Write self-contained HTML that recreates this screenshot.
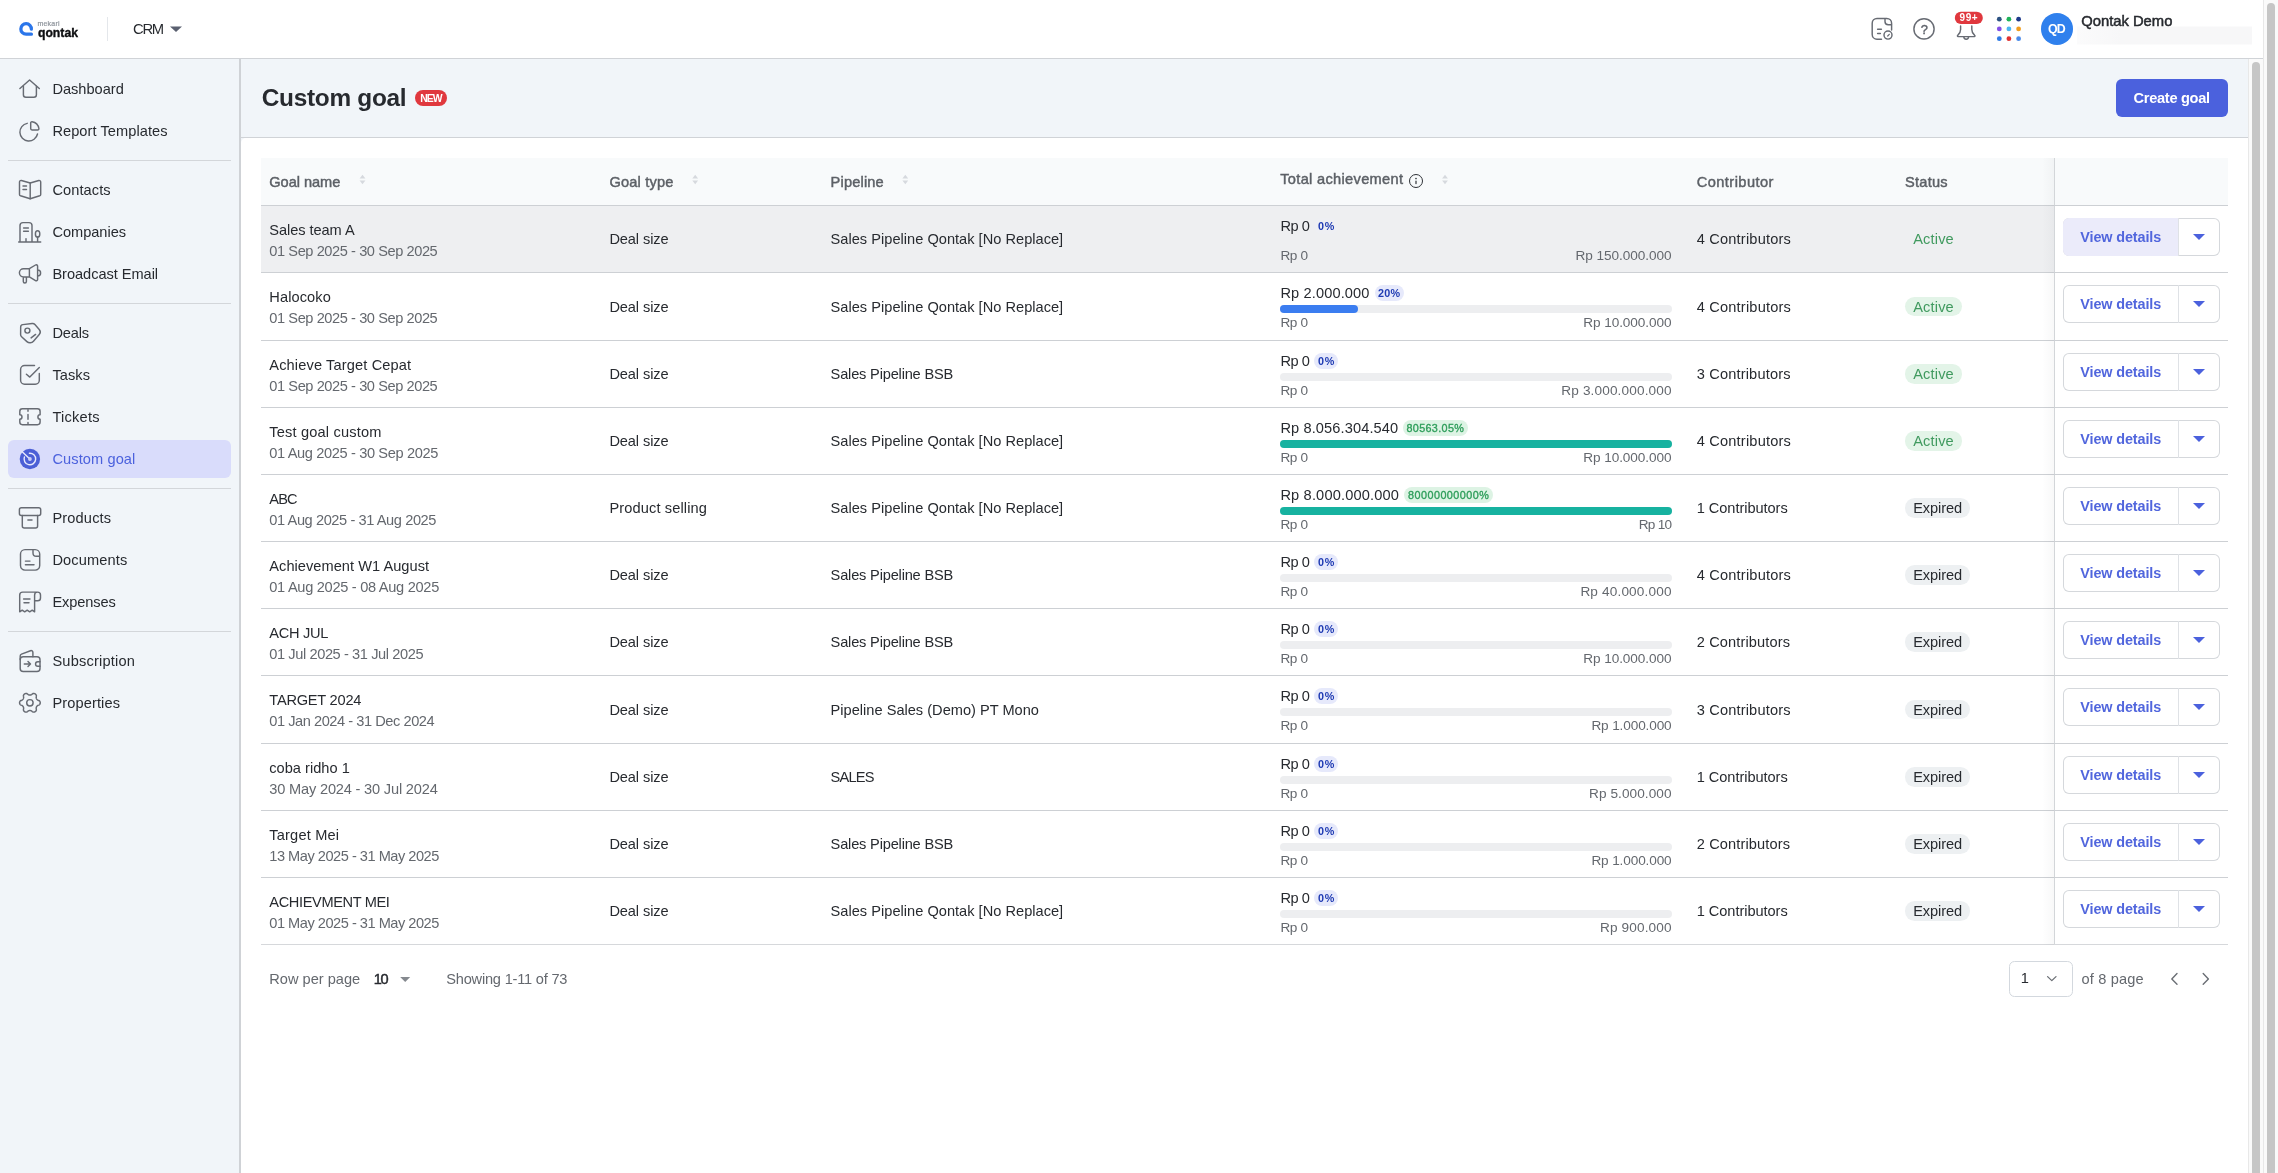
<!DOCTYPE html>
<html>
<head>
<meta charset="utf-8">
<title>Custom goal</title>
<style>
*{box-sizing:border-box;margin:0;padding:0}
html,body{width:2278px;height:1173px;overflow:hidden;background:#fff}
body{font-family:"Liberation Sans",sans-serif;color:#232933;position:relative;font-size:14px}
.abs{position:absolute}
#hdr{position:absolute;left:0;top:0;width:2263px;height:58px;background:#fff}
#hdrline{position:absolute;left:0;top:58px;width:2263px;height:1px;background:#d0d3d7}
#side{position:absolute;left:0;top:59px;width:239px;height:1114px;background:#f1f5f9}
#sideb{position:absolute;left:239px;top:59px;width:2px;height:1114px;background:#cfd2d6}
.sdiv{position:absolute;left:8px;width:223px;height:1px;background:#d3d6da}
#navact{position:absolute;left:8px;top:440px;width:223px;height:38px;border-radius:6px;background:#d9dcfb}
#main{position:absolute;left:241px;top:59px;width:2007px;height:1114px;background:#f1f5f9}
#mline{position:absolute;left:241px;top:137px;width:2007px;height:1px;background:#d0d3d7}
#panel{position:absolute;left:241px;top:138px;width:2007px;height:1035px;background:#fff;border-top-left-radius:5px}
#newb{position:absolute;left:415px;top:90px;width:32px;height:16px;border-radius:8px;background:#e0383e;color:#fff;font-size:10px;font-weight:bold;text-align:center;line-height:16px;letter-spacing:.2px}
#create{position:absolute;left:2116px;top:79px;width:112px;height:38px;border-radius:6px;background:#4b61dd}
.sbt{position:absolute;width:15px;background:#fafafa;border-left:1px solid #e8e8e8}
.sbth{position:absolute;width:8px;border-radius:4px;background:#c6c6c6}
#thead{position:absolute;left:261px;top:158px;width:1967px;height:47px;background:#f8fafb}
.hl{position:absolute;left:261px;width:1967px;height:1px;background:#cdd0d4}
.t{position:absolute;white-space:pre;line-height:20px}
#stick{position:absolute;left:2054px;top:158px;width:174px;height:787px;background:#fff;border-left:1px solid #d3d6d9}
#stickh{position:absolute;left:2055px;top:158px;width:173px;height:47px;background:#f8fafb}
#stsh{position:absolute;left:2042px;top:158px;width:12px;height:787px;background:linear-gradient(to right,rgba(35,41,51,0),rgba(35,41,51,.03))}
.btn{position:absolute;left:2063px;width:157px;height:38px;box-shadow:inset 0 0 0 1px #d5d8dc;border-radius:6px;background:#fff;overflow:hidden}
.btn i{position:absolute;left:0;top:0;width:115px;height:38px;background:#ebebfa}
.btn b{position:absolute;left:115px;top:0;width:1px;height:38px;background:#dfe2e6}
.btn s{position:absolute;left:130.3px;top:16.2px;width:0;height:0;border-left:6px solid transparent;border-right:6px solid transparent;border-top:6.2px solid #4b61dd}
#tx{position:absolute;left:0;top:0;width:2278px;height:1173px;will-change:transform}
#ov{position:absolute;left:0;top:0;width:2278px;height:1173px;pointer-events:none}
.ic{fill:none;stroke:#676b73;stroke-width:1.45;stroke-linecap:round;stroke-linejoin:round}
</style>
</head>
<body>
<div id="hdr"></div>
<div id="hdrline"></div>
<div id="side"></div>
<div id="sideb"></div>
<div id="navact"></div>
<div id="main"></div>
<div id="mline"></div>
<div id="panel"></div>
<div id="newb"></div>
<div id="create"></div>
<div id="thead"></div>
<div id="stick"></div>
<div id="stickh"></div>
<div class="sdiv" style="top:160px"></div>
<div class="sdiv" style="top:303px"></div>
<div class="sdiv" style="top:488px"></div>
<div class="sdiv" style="top:631px"></div>
<div class="abs" style="left:261px;top:206px;width:1793px;height:66px;background:#eeeff1"></div>
<div class="abs" style="left:1314.3px;top:218.0px;width:24.2px;height:16px;border-radius:8px;background:#eeeff3"></div>
<div class="btn" style="top:218px"><i></i><b></b><s></s></div>
<div class="abs" style="left:1374.5px;top:285.0px;width:29.8px;height:16px;border-radius:8px;background:#e6e9fb"></div>
<div class="abs" style="left:1280px;top:305px;width:392px;height:8px;border-radius:4px;background:#edeef0"></div>
<div class="abs" style="left:1280px;top:305px;width:78px;height:8px;border-radius:4px;background:#3b7df0"></div>
<div class="abs" style="left:1905px;top:297.1px;width:57px;height:19.4px;border-radius:9.7px;background:#e3f4e8"></div>
<div class="btn" style="top:285px"><b></b><s></s></div>
<div class="abs" style="left:1314.3px;top:353.0px;width:24.2px;height:16px;border-radius:8px;background:#e6e9fb"></div>
<div class="abs" style="left:1280px;top:373px;width:392px;height:8px;border-radius:4px;background:#edeef0"></div>
<div class="abs" style="left:1905px;top:364.2px;width:57px;height:19.4px;border-radius:9.7px;background:#e3f4e8"></div>
<div class="btn" style="top:353px"><b></b><s></s></div>
<div class="abs" style="left:1402.7px;top:420.0px;width:65.2px;height:16px;border-radius:8px;background:#ddf3e4"></div>
<div class="abs" style="left:1280px;top:440px;width:392px;height:8px;border-radius:4px;background:#edeef0"></div>
<div class="abs" style="left:1280px;top:440px;width:392.0px;height:8px;border-radius:4px;background:#17b2a0"></div>
<div class="abs" style="left:1905px;top:431.2px;width:57px;height:19.4px;border-radius:9.7px;background:#e3f4e8"></div>
<div class="btn" style="top:420px"><b></b><s></s></div>
<div class="abs" style="left:1404.3px;top:487.0px;width:88.5px;height:16px;border-radius:8px;background:#ddf3e4"></div>
<div class="abs" style="left:1280px;top:507px;width:392px;height:8px;border-radius:4px;background:#edeef0"></div>
<div class="abs" style="left:1280px;top:507px;width:392.0px;height:8px;border-radius:4px;background:#17b2a0"></div>
<div class="abs" style="left:1905px;top:498.2px;width:65.4px;height:19.4px;border-radius:9.7px;background:#edf0f2"></div>
<div class="btn" style="top:487px"><b></b><s></s></div>
<div class="abs" style="left:1314.3px;top:554.0px;width:24.2px;height:16px;border-radius:8px;background:#e6e9fb"></div>
<div class="abs" style="left:1280px;top:574px;width:392px;height:8px;border-radius:4px;background:#edeef0"></div>
<div class="abs" style="left:1905px;top:565.2px;width:65.4px;height:19.4px;border-radius:9.7px;background:#edf0f2"></div>
<div class="btn" style="top:554px"><b></b><s></s></div>
<div class="abs" style="left:1314.3px;top:621.0px;width:24.2px;height:16px;border-radius:8px;background:#e6e9fb"></div>
<div class="abs" style="left:1280px;top:641px;width:392px;height:8px;border-radius:4px;background:#edeef0"></div>
<div class="abs" style="left:1905px;top:632.2px;width:65.4px;height:19.4px;border-radius:9.7px;background:#edf0f2"></div>
<div class="btn" style="top:621px"><b></b><s></s></div>
<div class="abs" style="left:1314.3px;top:688.0px;width:24.2px;height:16px;border-radius:8px;background:#e6e9fb"></div>
<div class="abs" style="left:1280px;top:708px;width:392px;height:8px;border-radius:4px;background:#edeef0"></div>
<div class="abs" style="left:1905px;top:700.1px;width:65.4px;height:19.4px;border-radius:9.7px;background:#edf0f2"></div>
<div class="btn" style="top:688px"><b></b><s></s></div>
<div class="abs" style="left:1314.3px;top:756.0px;width:24.2px;height:16px;border-radius:8px;background:#e6e9fb"></div>
<div class="abs" style="left:1280px;top:776px;width:392px;height:8px;border-radius:4px;background:#edeef0"></div>
<div class="abs" style="left:1905px;top:767.2px;width:65.4px;height:19.4px;border-radius:9.7px;background:#edf0f2"></div>
<div class="btn" style="top:756px"><b></b><s></s></div>
<div class="abs" style="left:1314.3px;top:823.0px;width:24.2px;height:16px;border-radius:8px;background:#e6e9fb"></div>
<div class="abs" style="left:1280px;top:843px;width:392px;height:8px;border-radius:4px;background:#edeef0"></div>
<div class="abs" style="left:1905px;top:834.2px;width:65.4px;height:19.4px;border-radius:9.7px;background:#edf0f2"></div>
<div class="btn" style="top:823px"><b></b><s></s></div>
<div class="abs" style="left:1314.3px;top:890.0px;width:24.2px;height:16px;border-radius:8px;background:#e6e9fb"></div>
<div class="abs" style="left:1280px;top:910px;width:392px;height:8px;border-radius:4px;background:#edeef0"></div>
<div class="abs" style="left:1905px;top:901.2px;width:65.4px;height:19.4px;border-radius:9.7px;background:#edf0f2"></div>
<div class="btn" style="top:890px"><b></b><s></s></div>
<div class="hl" style="top:205px"></div>
<div class="hl" style="top:272px"></div>
<div class="hl" style="top:340px"></div>
<div class="hl" style="top:407px"></div>
<div class="hl" style="top:474px"></div>
<div class="hl" style="top:541px"></div>
<div class="hl" style="top:608px"></div>
<div class="hl" style="top:675px"></div>
<div class="hl" style="top:743px"></div>
<div class="hl" style="top:810px"></div>
<div class="hl" style="top:877px"></div>
<div class="hl" style="top:944px;background:#d6d8db"></div>
<div id="stsh"></div>
<svg id="ov" viewBox="0 0 2278 1173">
<!-- logo -->
<g id="logo">
<path d="M31.35 29.1 A5.25 5.25 0 1 0 26.1 34.2 H31.4" fill="none" stroke="#2b76ea" stroke-width="3.3" stroke-linecap="round" stroke-linejoin="round"/>
</g>
<rect x="107" y="17" width="1" height="24" fill="#e4e7eb"/>
<path d="M170 26.4 H182 L176 32 Z" fill="#5a6070"/>
<!-- sidebar icons -->
<g class="ic">
<path d="M19.9 88.5 L29.6 80 L39.3 88.5"/>
<path d="M23.4 86.2 V94.8 a2.5 2.5 0 0 0 2.5 2.5 H33.9 a2.5 2.5 0 0 0 2.5 -2.5 V86.2"/>
<path d="M27.2 123.35 A8.9 8.9 0 1 0 37.5 134"/>
<path d="M30.7 122.9 V128.6 a1.3 1.3 0 0 0 1.3 1.3 H37.7 a1.2 1.2 0 0 0 1.2 -1.4 A8.4 8.4 0 0 0 32.1 121.8 a1.2 1.2 0 0 0 -1.4 1.1 Z"/>
<path d="M30.2 183 L21.4 180.5 a1.5 1.5 0 0 0 -1.9 1.4 V194.4 a1.5 1.5 0 0 0 1 1.4 L30.2 198.8 L39.7 195.8 a1.5 1.5 0 0 0 1 -1.4 V181.9 a1.5 1.5 0 0 0 -1.9 -1.4 Z"/>
<path d="M30.2 183 V198.8 M23 186 h3.5 M23 189.5 h3.5"/>
<path d="M20 242 V225.6 a3 3 0 0 1 3 -3 h6 a3 3 0 0 1 3 3 V242 M18.7 242 H40.7 M23.6 228 h4.8 M23.6 231.3 h4.8 M26 238.6 V242 M37.6 237.2 V242"/>
<ellipse cx="37.6" cy="233.9" rx="2.2" ry="3.2"/>
<path d="M29.4 268.7 H23.5 a4.1 4.1 0 0 0 0 8.2 H29.4 M29.4 268.7 L35.5 265 a1.4 1.4 0 0 1 2.1 1.2 V279.4 a1.4 1.4 0 0 1 -2.1 1.2 L29.4 276.9 Z M37.6 270 a3 3 0 0 1 0 6 M23.3 277 V281.5 a1.55 1.55 0 0 0 3.1 0 V277"/>
<path d="M20.68 327.01 A2.4 2.4 0 0 1 22.79 324.64 L32.12 323.51 A3.2 3.2 0 0 1 34.92 324.58 L39.23 329.52 A3.8 3.8 0 0 1 39.25 334.50 L33.48 341.21 A4.6 4.6 0 0 1 26.90 341.62 L21.60 336.80 A3.0 3.0 0 0 1 20.61 334.56 Z"/>
<circle cx="27.4" cy="330.6" r="2.5"/>
<path d="M31.1 337.9 L35.6 334.4"/>
<path d="M34.5 365.5 H24.6 a4 4 0 0 0 -4 4 V380.2 a4 4 0 0 0 4 4 H35.3 a4 4 0 0 0 4 -4 V373.5 M26.4 374.3 L29.8 377.1 L39.3 367.5"/>
<path d="M22.4 408.8 H37.5 a2.6 2.6 0 0 1 2.6 2.6 V414.7 a2.2 2.2 0 0 0 0 4.4 V422.1 a2.6 2.6 0 0 1 -2.6 2.6 H22.4 a2.6 2.6 0 0 1 -2.6 -2.6 V419.1 a2.2 2.2 0 0 0 0 -4.4 V411.4 a2.6 2.6 0 0 1 2.6 -2.6 Z"/>
<path d="M28 409.6 V411.2 M28 414.4 V419.2 M28 422.4 V424"/>
<rect x="19.4" y="507.7" width="21.3" height="7.7" rx="2"/>
<path d="M22.3 515.4 V526 a2 2 0 0 0 2 2 H35.6 a2 2 0 0 0 2 -2 V515.4 M27.9 520 H32"/>
<rect x="20.5" y="549.6" width="19.2" height="20.5" rx="4.5"/>
<path d="M33 550.2 V553 a3.3 3.3 0 0 0 3.3 3.3 H39.2 M25.4 561.1 H30 M25.4 564.7 H34"/>
<path d="M34.6 611.8 V595.1 a3 3 0 0 1 3 -3 H22.7 a3 3 0 0 0 -3 3 V611.8 l2.5 -1.6 l2.5 1.6 l2.5 -1.6 l2.5 1.6 l2.5 -1.6 Z M37.6 592.1 a2.9 2.9 0 0 1 2.9 2.9 V598 a2.8 2.8 0 0 1 -2.8 2.8 H34.6 M23.6 599 H30 M24 602.7 H29"/>
<rect x="20.2" y="656.7" width="19.8" height="14.7" rx="3"/>
<path d="M20.2 659.5 V656 a2 2 0 0 1 1.3 -1.9 L30.5 650.7 a1.8 1.8 0 0 1 2.4 1.7 V656.7 M40 661.8 H37.8 a2.25 2.25 0 0 0 0 4.5 H40 M24.3 663.9 H30.5 M28 661.4 L30.5 663.9 L28 666.4"/>
<path d="M40.25 702.80 L40.20 703.34 L40.04 703.87 L39.77 704.36 L39.38 704.82 L38.64 705.14 L37.90 705.40 L37.47 705.70 L37.12 706.02 L36.84 706.34 L36.61 706.67 L36.43 707.04 L36.30 707.45 L36.20 707.90 L36.15 708.43 L36.30 709.20 L36.39 710.00 L36.19 710.57 L35.89 711.05 L35.52 711.45 L35.08 711.76 L34.58 711.99 L34.05 712.11 L33.48 712.13 L32.90 712.02 L32.24 711.54 L31.65 711.02 L31.17 710.81 L30.73 710.66 L30.31 710.58 L29.90 710.55 L29.49 710.58 L29.07 710.66 L28.63 710.81 L28.15 711.02 L27.56 711.54 L26.90 712.02 L26.32 712.13 L25.75 712.11 L25.22 711.99 L24.73 711.76 L24.28 711.45 L23.91 711.05 L23.61 710.57 L23.41 710.00 L23.50 709.20 L23.65 708.43 L23.60 707.90 L23.50 707.45 L23.37 707.04 L23.19 706.67 L22.96 706.34 L22.68 706.02 L22.33 705.70 L21.90 705.40 L21.16 705.14 L20.42 704.82 L20.03 704.36 L19.76 703.87 L19.60 703.34 L19.55 702.80 L19.60 702.26 L19.76 701.73 L20.03 701.24 L20.42 700.78 L21.16 700.46 L21.90 700.20 L22.33 699.90 L22.68 699.58 L22.96 699.26 L23.19 698.92 L23.37 698.56 L23.50 698.15 L23.60 697.70 L23.65 697.17 L23.50 696.40 L23.41 695.60 L23.61 695.03 L23.91 694.55 L24.28 694.15 L24.72 693.84 L25.22 693.61 L25.75 693.49 L26.32 693.47 L26.90 693.58 L27.56 694.06 L28.15 694.58 L28.63 694.79 L29.07 694.94 L29.49 695.02 L29.90 695.05 L30.31 695.02 L30.73 694.94 L31.17 694.79 L31.65 694.58 L32.24 694.06 L32.90 693.58 L33.48 693.47 L34.05 693.49 L34.58 693.61 L35.08 693.84 L35.52 694.15 L35.89 694.55 L36.19 695.03 L36.39 695.60 L36.30 696.40 L36.15 697.17 L36.20 697.70 L36.30 698.15 L36.43 698.56 L36.61 698.92 L36.84 699.26 L37.12 699.58 L37.47 699.90 L37.90 700.20 L38.64 700.46 L39.38 700.78 L39.77 701.24 L40.04 701.73 L40.20 702.26Z"/>
<circle cx="29.9" cy="702.8" r="3.2"/>
</g>
<!-- custom goal active icon -->
<circle cx="29.9" cy="459" r="10.2" fill="#4b5fd6"/>
<path d="M29.4 453.2 A5.8 5.8 0 1 1 24.4 457" fill="none" stroke="#e8eafc" stroke-width="1.4" stroke-linecap="round"/>
<path d="M22.2 451.8 L29.6 458.7" stroke="#e8eafc" stroke-width="1.4" stroke-linecap="round"/>
<circle cx="29.9" cy="459" r="1.9" fill="#c9cef6"/>
<!-- header right icons -->
<g class="ic">
<path d="M1891.6 30 V23.2 a4.8 4.8 0 0 0 -4.8 -4.8 H1877 a4.8 4.8 0 0 0 -4.8 4.8 V34.4 a4.8 4.8 0 0 0 4.8 4.8 H1881.5"/>
<path d="M1885 18.6 V21.5 a3.2 3.2 0 0 0 3.2 3.2 H1891.4 M1877.6 29.2 H1881.4 M1877.6 33.4 H1880.4"/>
<circle cx="1888" cy="35.1" r="4"/>
<path d="M1887.7 36 L1889.3 34.3" stroke-width="1.2"/>
<circle cx="1924" cy="28.9" r="10.1"/>
<path d="M1958 36.6 C1957.4 36.6 1957.2 35.8 1957.7 35.4 C1959.6 33.8 1960.6 31.8 1960.6 29.5 V26 M1974.4 36.6 C1975 36.6 1975.2 35.8 1974.7 35.4 C1972.8 33.8 1971.8 31.8 1971.8 29.5 V26 M1958 36.6 H1974.4 M1963.8 36.8 a2.4 2.4 0 0 0 4.8 0"/>
</g>
<rect x="1954.8" y="11.8" width="28" height="12.2" rx="6.1" fill="#e0383e"/>
<g>
<circle cx="1999.3" cy="19.2" r="2.4" fill="#2c5282"/><circle cx="2008.9" cy="19.2" r="2.4" fill="#1fb35a"/><circle cx="2018.6" cy="19.2" r="2.4" fill="#1e3a8a"/>
<circle cx="1999.3" cy="28.9" r="2.4" fill="#8250e6"/><circle cx="2008.9" cy="28.9" r="2.4" fill="#4db8f0"/><circle cx="2018.6" cy="28.9" r="2.4" fill="#f29d1d"/>
<circle cx="1999.3" cy="38.7" r="2.4" fill="#2f7ae5"/><circle cx="2008.9" cy="38.7" r="2.4" fill="#e03131"/><circle cx="2018.6" cy="38.7" r="2.4" fill="#4b8bea"/>
</g>
<circle cx="2057" cy="28.9" r="16" fill="#2f80ed"/>
<defs><linearGradient id="blr" x1="0" x2="1" y1="0" y2="0"><stop offset="0" stop-color="#f7f7f8" stop-opacity=".5"/><stop offset=".25" stop-color="#f7f7f8"/><stop offset="1" stop-color="#f7f7f8"/></linearGradient></defs><rect x="2077" y="26.5" width="175" height="18" fill="url(#blr)"/>
<!-- sort icons -->
<g fill="#d6d9de">
<path d="M359.6 178.4 L362.5 174.8 L365.4 178.4 Z M359.6 180.6 L362.5 184.2 L365.4 180.6 Z"/>
<path d="M692.3 178.4 L695.2 174.8 L698.1 178.4 Z M692.3 180.6 L695.2 184.2 L698.1 180.6 Z"/>
<path d="M902.4 178.4 L905.3 174.8 L908.2 178.4 Z M902.4 180.6 L905.3 184.2 L908.2 180.6 Z"/>
<path d="M1442.1 178.4 L1445 174.8 L1447.9 178.4 Z M1442.1 180.6 L1445 184.2 L1447.9 180.6 Z"/>
</g>
<!-- info icon -->
<circle cx="1416" cy="181" r="6.5" fill="none" stroke="#2f3237" stroke-width="1"/>
<path d="M1416 181 V183.6" stroke="#2f3237" stroke-width="1.2" stroke-linecap="round" fill="none"/>
<circle cx="1416" cy="178.6" r=".8" fill="#2f3237"/>
<!-- footer -->
<path d="M400.2 976.9 H410.2 L405.2 982 Z" fill="#85898f"/>
<rect x="2009.5" y="961.5" width="63" height="35" rx="5" fill="#fff" stroke="#d3d8de"/>
<path d="M2047.6 976.6 L2051.8 980.6 L2056 976.6" fill="none" stroke="#6a6e74" stroke-width="1.3" stroke-linecap="round" stroke-linejoin="round"/>
<path d="M2177 973.6 L2171.8 978.9 L2177 984.2" fill="none" stroke="#6a6e74" stroke-width="1.4" stroke-linecap="round" stroke-linejoin="round"/>
<path d="M2203.2 973.6 L2208.4 978.9 L2203.2 984.2" fill="none" stroke="#6a6e74" stroke-width="1.4" stroke-linecap="round" stroke-linejoin="round"/>
</svg>
<div id="tx"><div class="t" style="left:52.4px;top:78.8px;font-size:14.6px;color:#272a2f;letter-spacing:-0.001px;">Dashboard</div>
<div class="t" style="left:52.4px;top:120.8px;font-size:14.6px;color:#272a2f;letter-spacing:0.070px;">Report Templates</div>
<div class="t" style="left:52.4px;top:179.7px;font-size:14.6px;color:#272a2f;letter-spacing:0.094px;">Contacts</div>
<div class="t" style="left:52.4px;top:221.7px;font-size:14.6px;color:#272a2f;letter-spacing:-0.015px;">Companies</div>
<div class="t" style="left:52.4px;top:263.7px;font-size:14.6px;color:#272a2f;letter-spacing:-0.039px;">Broadcast Email</div>
<div class="t" style="left:52.4px;top:322.8px;font-size:14.6px;color:#272a2f;letter-spacing:-0.158px;">Deals</div>
<div class="t" style="left:52.4px;top:364.7px;font-size:14.6px;color:#272a2f;letter-spacing:0.086px;">Tasks</div>
<div class="t" style="left:52.4px;top:406.7px;font-size:14.6px;color:#272a2f;letter-spacing:0.248px;">Tickets</div>
<div class="t" style="left:52.4px;top:448.7px;font-size:14.6px;color:#4b61dd;letter-spacing:0.101px;">Custom goal</div>
<div class="t" style="left:52.4px;top:507.7px;font-size:14.6px;color:#272a2f;letter-spacing:0.161px;">Products</div>
<div class="t" style="left:52.4px;top:549.7px;font-size:14.6px;color:#272a2f;letter-spacing:0.128px;">Documents</div>
<div class="t" style="left:52.4px;top:591.7px;font-size:14.6px;color:#272a2f;letter-spacing:-0.093px;">Expenses</div>
<div class="t" style="left:52.4px;top:650.7px;font-size:14.6px;color:#272a2f;letter-spacing:0.199px;">Subscription</div>
<div class="t" style="left:52.4px;top:692.7px;font-size:14.6px;color:#272a2f;letter-spacing:0.114px;">Properties</div>
<div class="t" style="left:133.0px;top:18.9px;font-size:14.8px;color:#272a2f;letter-spacing:-1.281px;">CRM</div>
<div class="t" style="left:420.3px;top:88.9px;font-size:10.4px;color:#fff;letter-spacing:-0.980px;font-weight:700;">NEW</div>
<div class="t" style="left:37.4px;top:13.6px;font-size:7px;color:#8f959c;letter-spacing:0.252px;-webkit-text-stroke:.2px #8f959c;">mekari</div>
<div class="t" style="left:37.9px;top:22.8px;font-size:12.2px;color:#0d0e10;letter-spacing:0.045px;font-weight:700;-webkit-text-stroke:.35px #0d0e10;">qontak</div>
<div class="t" style="left:1920.7px;top:19.7px;font-size:12.8px;color:#5f636b;letter-spacing:-0.525px;-webkit-text-stroke:.4px #5f636b;">?</div>
<div class="t" style="left:1959.6px;top:8.4px;font-size:10px;color:#fff;letter-spacing:0.492px;font-weight:700;">99+</div>
<div class="t" style="left:2048.1px;top:19.2px;font-size:12.4px;color:#fff;letter-spacing:-0.929px;font-weight:700;">QD</div>
<div class="t" style="left:2081.2px;top:10.6px;font-size:14.8px;color:#272a2f;letter-spacing:-0.009px;-webkit-text-stroke:.5px #272a2f;">Qontak Demo</div>
<div class="t" style="left:261.8px;top:88.3px;font-size:24.4px;color:#272a2f;letter-spacing:-0.296px;font-weight:700;">Custom goal</div>
<div class="t" style="left:2133.5px;top:88.0px;font-size:14.6px;color:#fff;letter-spacing:-0.284px;font-weight:700;">Create goal</div>
<div class="t" style="left:269.3px;top:172.0px;font-size:14.6px;color:#5c6066;letter-spacing:-0.046px;-webkit-text-stroke:.45px #5c6066;">Goal name</div>
<div class="t" style="left:609.4px;top:172.0px;font-size:14.6px;color:#5c6066;letter-spacing:0.180px;-webkit-text-stroke:.45px #5c6066;">Goal type</div>
<div class="t" style="left:830.6px;top:172.0px;font-size:14.6px;color:#5c6066;letter-spacing:0.168px;-webkit-text-stroke:.45px #5c6066;">Pipeline</div>
<div class="t" style="left:1280.2px;top:169.0px;font-size:14.6px;color:#5c6066;letter-spacing:0.325px;-webkit-text-stroke:.45px #5c6066;">Total achievement</div>
<div class="t" style="left:1696.7px;top:172.0px;font-size:14.6px;color:#5c6066;letter-spacing:0.457px;-webkit-text-stroke:.45px #5c6066;">Contributor</div>
<div class="t" style="left:1905.0px;top:172.0px;font-size:14.6px;color:#5c6066;letter-spacing:0.259px;-webkit-text-stroke:.45px #5c6066;">Status</div>
<div class="t" style="left:269.3px;top:219.8px;font-size:14.6px;color:#272a2f;letter-spacing:-0.061px;">Sales team A</div>
<div class="t" style="left:269.3px;top:240.8px;font-size:14.6px;color:#64686e;letter-spacing:-0.422px;">01 Sep 2025 - 30 Sep 2025</div>
<div class="t" style="left:609.4px;top:229.1px;font-size:14.6px;color:#272a2f;letter-spacing:-0.098px;">Deal size</div>
<div class="t" style="left:830.6px;top:229.1px;font-size:14.6px;color:#272a2f;letter-spacing:0.017px;">Sales Pipeline Qontak [No Replace]</div>
<div class="t" style="left:1280.4px;top:215.6px;font-size:14.6px;color:#272a2f;letter-spacing:-0.437px;">Rp 0</div>
<div class="t" style="left:1318.0px;top:215.8px;font-size:10.8px;color:#1f3bb3;letter-spacing:0.794px;font-weight:700;">0%</div>
<div class="t" style="left:1280.4px;top:245.7px;font-size:13.6px;color:#64686e;letter-spacing:-0.377px;">Rp 0</div>
<div class="t" style="left:1575.5px;top:245.7px;font-size:13.6px;color:#64686e;letter-spacing:-0.048px;">Rp 150.000.000</div>
<div class="t" style="left:1696.7px;top:229.1px;font-size:14.6px;color:#272a2f;letter-spacing:0.195px;">4 Contributors</div>
<div class="t" style="left:1913.2px;top:229.1px;font-size:14.6px;color:#409a5f;letter-spacing:0.155px;">Active</div>
<div class="t" style="left:2080.3px;top:227.0px;font-size:14.4px;color:#5166dd;letter-spacing:-0.107px;font-weight:700;">View details</div>
<div class="t" style="left:269.3px;top:286.8px;font-size:14.6px;color:#272a2f;letter-spacing:0.087px;">Halocoko</div>
<div class="t" style="left:269.3px;top:307.8px;font-size:14.6px;color:#64686e;letter-spacing:-0.422px;">01 Sep 2025 - 30 Sep 2025</div>
<div class="t" style="left:609.4px;top:297.0px;font-size:14.6px;color:#272a2f;letter-spacing:-0.098px;">Deal size</div>
<div class="t" style="left:830.6px;top:297.0px;font-size:14.6px;color:#272a2f;letter-spacing:0.017px;">Sales Pipeline Qontak [No Replace]</div>
<div class="t" style="left:1280.4px;top:282.6px;font-size:14.6px;color:#272a2f;letter-spacing:0.127px;">Rp 2.000.000</div>
<div class="t" style="left:1378.0px;top:282.8px;font-size:10.8px;color:#1f3bb3;letter-spacing:0.230px;font-weight:700;">20%</div>
<div class="t" style="left:1280.4px;top:312.7px;font-size:13.6px;color:#64686e;letter-spacing:-0.377px;">Rp 0</div>
<div class="t" style="left:1583.2px;top:312.7px;font-size:13.6px;color:#64686e;letter-spacing:-0.064px;">Rp 10.000.000</div>
<div class="t" style="left:1696.7px;top:297.0px;font-size:14.6px;color:#272a2f;letter-spacing:0.195px;">4 Contributors</div>
<div class="t" style="left:1913.2px;top:297.0px;font-size:14.6px;color:#409a5f;letter-spacing:0.155px;">Active</div>
<div class="t" style="left:2080.3px;top:294.0px;font-size:14.4px;color:#5166dd;letter-spacing:-0.107px;font-weight:700;">View details</div>
<div class="t" style="left:269.3px;top:354.8px;font-size:14.6px;color:#272a2f;letter-spacing:0.134px;">Achieve Target Cepat</div>
<div class="t" style="left:269.3px;top:375.8px;font-size:14.6px;color:#64686e;letter-spacing:-0.422px;">01 Sep 2025 - 30 Sep 2025</div>
<div class="t" style="left:609.4px;top:364.1px;font-size:14.6px;color:#272a2f;letter-spacing:-0.098px;">Deal size</div>
<div class="t" style="left:830.6px;top:364.1px;font-size:14.6px;color:#272a2f;letter-spacing:-0.180px;">Sales Pipeline BSB</div>
<div class="t" style="left:1280.4px;top:350.6px;font-size:14.6px;color:#272a2f;letter-spacing:-0.437px;">Rp 0</div>
<div class="t" style="left:1318.0px;top:350.8px;font-size:10.8px;color:#1f3bb3;letter-spacing:0.794px;font-weight:700;">0%</div>
<div class="t" style="left:1280.4px;top:380.7px;font-size:13.6px;color:#64686e;letter-spacing:-0.377px;">Rp 0</div>
<div class="t" style="left:1561.3px;top:380.7px;font-size:13.6px;color:#64686e;letter-spacing:0.142px;">Rp 3.000.000.000</div>
<div class="t" style="left:1696.7px;top:364.1px;font-size:14.6px;color:#272a2f;letter-spacing:0.165px;">3 Contributors</div>
<div class="t" style="left:1913.2px;top:364.1px;font-size:14.6px;color:#409a5f;letter-spacing:0.155px;">Active</div>
<div class="t" style="left:2080.3px;top:362.0px;font-size:14.4px;color:#5166dd;letter-spacing:-0.107px;font-weight:700;">View details</div>
<div class="t" style="left:269.3px;top:421.8px;font-size:14.6px;color:#272a2f;letter-spacing:0.173px;">Test goal custom</div>
<div class="t" style="left:269.3px;top:442.8px;font-size:14.6px;color:#64686e;letter-spacing:-0.364px;">01 Aug 2025 - 30 Sep 2025</div>
<div class="t" style="left:609.4px;top:431.1px;font-size:14.6px;color:#272a2f;letter-spacing:-0.098px;">Deal size</div>
<div class="t" style="left:830.6px;top:431.1px;font-size:14.6px;color:#272a2f;letter-spacing:0.017px;">Sales Pipeline Qontak [No Replace]</div>
<div class="t" style="left:1280.4px;top:417.6px;font-size:14.6px;color:#272a2f;letter-spacing:0.113px;">Rp 8.056.304.540</div>
<div class="t" style="left:1406.5px;top:417.8px;font-size:10.8px;color:#2f9e5b;letter-spacing:0.336px;-webkit-text-stroke:.35px #2f9e5b;">80563.05%</div>
<div class="t" style="left:1280.4px;top:447.7px;font-size:13.6px;color:#64686e;letter-spacing:-0.377px;">Rp 0</div>
<div class="t" style="left:1583.2px;top:447.7px;font-size:13.6px;color:#64686e;letter-spacing:-0.064px;">Rp 10.000.000</div>
<div class="t" style="left:1696.7px;top:431.1px;font-size:14.6px;color:#272a2f;letter-spacing:0.195px;">4 Contributors</div>
<div class="t" style="left:1913.2px;top:431.1px;font-size:14.6px;color:#409a5f;letter-spacing:0.155px;">Active</div>
<div class="t" style="left:2080.3px;top:429.0px;font-size:14.4px;color:#5166dd;letter-spacing:-0.107px;font-weight:700;">View details</div>
<div class="t" style="left:269.3px;top:488.8px;font-size:14.6px;color:#272a2f;letter-spacing:-0.846px;">ABC</div>
<div class="t" style="left:269.3px;top:509.8px;font-size:14.6px;color:#64686e;letter-spacing:-0.408px;">01 Aug 2025 - 31 Aug 2025</div>
<div class="t" style="left:609.4px;top:498.1px;font-size:14.6px;color:#272a2f;letter-spacing:0.129px;">Product selling</div>
<div class="t" style="left:830.6px;top:498.1px;font-size:14.6px;color:#272a2f;letter-spacing:0.017px;">Sales Pipeline Qontak [No Replace]</div>
<div class="t" style="left:1280.4px;top:484.6px;font-size:14.6px;color:#272a2f;letter-spacing:0.165px;">Rp 8.000.000.000</div>
<div class="t" style="left:1408.1px;top:484.8px;font-size:10.8px;color:#2f9e5b;letter-spacing:0.456px;-webkit-text-stroke:.35px #2f9e5b;">80000000000%</div>
<div class="t" style="left:1280.4px;top:514.7px;font-size:13.6px;color:#64686e;letter-spacing:-0.377px;">Rp 0</div>
<div class="t" style="left:1638.8px;top:514.7px;font-size:13.6px;color:#64686e;letter-spacing:-0.774px;">Rp 10</div>
<div class="t" style="left:1696.7px;top:498.1px;font-size:14.6px;color:#272a2f;letter-spacing:-0.050px;">1 Contributors</div>
<div class="t" style="left:1913.2px;top:498.1px;font-size:14.6px;color:#272a2f;letter-spacing:-0.075px;">Expired</div>
<div class="t" style="left:2080.3px;top:496.0px;font-size:14.4px;color:#5166dd;letter-spacing:-0.107px;font-weight:700;">View details</div>
<div class="t" style="left:269.3px;top:555.8px;font-size:14.6px;color:#272a2f;letter-spacing:0.039px;">Achievement W1 August</div>
<div class="t" style="left:269.3px;top:576.8px;font-size:14.6px;color:#64686e;letter-spacing:-0.290px;">01 Aug 2025 - 08 Aug 2025</div>
<div class="t" style="left:609.4px;top:565.1px;font-size:14.6px;color:#272a2f;letter-spacing:-0.098px;">Deal size</div>
<div class="t" style="left:830.6px;top:565.1px;font-size:14.6px;color:#272a2f;letter-spacing:-0.180px;">Sales Pipeline BSB</div>
<div class="t" style="left:1280.4px;top:551.6px;font-size:14.6px;color:#272a2f;letter-spacing:-0.437px;">Rp 0</div>
<div class="t" style="left:1318.0px;top:551.8px;font-size:10.8px;color:#1f3bb3;letter-spacing:0.794px;font-weight:700;">0%</div>
<div class="t" style="left:1280.4px;top:581.7px;font-size:13.6px;color:#64686e;letter-spacing:-0.377px;">Rp 0</div>
<div class="t" style="left:1580.4px;top:581.7px;font-size:13.6px;color:#64686e;letter-spacing:0.160px;">Rp 40.000.000</div>
<div class="t" style="left:1696.7px;top:565.1px;font-size:14.6px;color:#272a2f;letter-spacing:0.195px;">4 Contributors</div>
<div class="t" style="left:1913.2px;top:565.1px;font-size:14.6px;color:#272a2f;letter-spacing:-0.075px;">Expired</div>
<div class="t" style="left:2080.3px;top:563.0px;font-size:14.4px;color:#5166dd;letter-spacing:-0.107px;font-weight:700;">View details</div>
<div class="t" style="left:269.3px;top:622.8px;font-size:14.6px;color:#272a2f;letter-spacing:-0.281px;">ACH JUL</div>
<div class="t" style="left:269.3px;top:643.8px;font-size:14.6px;color:#64686e;letter-spacing:-0.404px;">01 Jul 2025 - 31 Jul 2025</div>
<div class="t" style="left:609.4px;top:632.1px;font-size:14.6px;color:#272a2f;letter-spacing:-0.098px;">Deal size</div>
<div class="t" style="left:830.6px;top:632.1px;font-size:14.6px;color:#272a2f;letter-spacing:-0.180px;">Sales Pipeline BSB</div>
<div class="t" style="left:1280.4px;top:618.6px;font-size:14.6px;color:#272a2f;letter-spacing:-0.437px;">Rp 0</div>
<div class="t" style="left:1318.0px;top:618.8px;font-size:10.8px;color:#1f3bb3;letter-spacing:0.794px;font-weight:700;">0%</div>
<div class="t" style="left:1280.4px;top:648.7px;font-size:13.6px;color:#64686e;letter-spacing:-0.377px;">Rp 0</div>
<div class="t" style="left:1583.2px;top:648.7px;font-size:13.6px;color:#64686e;letter-spacing:-0.064px;">Rp 10.000.000</div>
<div class="t" style="left:1696.7px;top:632.1px;font-size:14.6px;color:#272a2f;letter-spacing:0.135px;">2 Contributors</div>
<div class="t" style="left:1913.2px;top:632.1px;font-size:14.6px;color:#272a2f;letter-spacing:-0.075px;">Expired</div>
<div class="t" style="left:2080.3px;top:630.0px;font-size:14.4px;color:#5166dd;letter-spacing:-0.107px;font-weight:700;">View details</div>
<div class="t" style="left:269.3px;top:689.8px;font-size:14.6px;color:#272a2f;letter-spacing:-0.226px;">TARGET 2024</div>
<div class="t" style="left:269.3px;top:710.8px;font-size:14.6px;color:#64686e;letter-spacing:-0.448px;">01 Jan 2024 - 31 Dec 2024</div>
<div class="t" style="left:609.4px;top:700.0px;font-size:14.6px;color:#272a2f;letter-spacing:-0.098px;">Deal size</div>
<div class="t" style="left:830.6px;top:700.0px;font-size:14.6px;color:#272a2f;letter-spacing:0.007px;">Pipeline Sales (Demo) PT Mono</div>
<div class="t" style="left:1280.4px;top:685.6px;font-size:14.6px;color:#272a2f;letter-spacing:-0.437px;">Rp 0</div>
<div class="t" style="left:1318.0px;top:685.8px;font-size:10.8px;color:#1f3bb3;letter-spacing:0.794px;font-weight:700;">0%</div>
<div class="t" style="left:1280.4px;top:715.7px;font-size:13.6px;color:#64686e;letter-spacing:-0.377px;">Rp 0</div>
<div class="t" style="left:1591.4px;top:715.7px;font-size:13.6px;color:#64686e;letter-spacing:-0.125px;">Rp 1.000.000</div>
<div class="t" style="left:1696.7px;top:700.0px;font-size:14.6px;color:#272a2f;letter-spacing:0.165px;">3 Contributors</div>
<div class="t" style="left:1913.2px;top:700.0px;font-size:14.6px;color:#272a2f;letter-spacing:-0.075px;">Expired</div>
<div class="t" style="left:2080.3px;top:697.0px;font-size:14.4px;color:#5166dd;letter-spacing:-0.107px;font-weight:700;">View details</div>
<div class="t" style="left:269.3px;top:757.8px;font-size:14.6px;color:#272a2f;letter-spacing:0.015px;">coba ridho 1</div>
<div class="t" style="left:269.3px;top:778.8px;font-size:14.6px;color:#64686e;letter-spacing:-0.180px;">30 May 2024 - 30 Jul 2024</div>
<div class="t" style="left:609.4px;top:767.1px;font-size:14.6px;color:#272a2f;letter-spacing:-0.098px;">Deal size</div>
<div class="t" style="left:830.6px;top:767.1px;font-size:14.6px;color:#272a2f;letter-spacing:-0.814px;">SALES</div>
<div class="t" style="left:1280.4px;top:753.6px;font-size:14.6px;color:#272a2f;letter-spacing:-0.437px;">Rp 0</div>
<div class="t" style="left:1318.0px;top:753.8px;font-size:10.8px;color:#1f3bb3;letter-spacing:0.794px;font-weight:700;">0%</div>
<div class="t" style="left:1280.4px;top:783.7px;font-size:13.6px;color:#64686e;letter-spacing:-0.377px;">Rp 0</div>
<div class="t" style="left:1589.0px;top:783.7px;font-size:13.6px;color:#64686e;letter-spacing:0.083px;">Rp 5.000.000</div>
<div class="t" style="left:1696.7px;top:767.1px;font-size:14.6px;color:#272a2f;letter-spacing:-0.050px;">1 Contributors</div>
<div class="t" style="left:1913.2px;top:767.1px;font-size:14.6px;color:#272a2f;letter-spacing:-0.075px;">Expired</div>
<div class="t" style="left:2080.3px;top:765.0px;font-size:14.4px;color:#5166dd;letter-spacing:-0.107px;font-weight:700;">View details</div>
<div class="t" style="left:269.3px;top:824.8px;font-size:14.6px;color:#272a2f;letter-spacing:0.175px;">Target Mei</div>
<div class="t" style="left:269.3px;top:845.8px;font-size:14.6px;color:#64686e;letter-spacing:-0.487px;">13 May 2025 - 31 May 2025</div>
<div class="t" style="left:609.4px;top:834.1px;font-size:14.6px;color:#272a2f;letter-spacing:-0.098px;">Deal size</div>
<div class="t" style="left:830.6px;top:834.1px;font-size:14.6px;color:#272a2f;letter-spacing:-0.180px;">Sales Pipeline BSB</div>
<div class="t" style="left:1280.4px;top:820.6px;font-size:14.6px;color:#272a2f;letter-spacing:-0.437px;">Rp 0</div>
<div class="t" style="left:1318.0px;top:820.8px;font-size:10.8px;color:#1f3bb3;letter-spacing:0.794px;font-weight:700;">0%</div>
<div class="t" style="left:1280.4px;top:850.7px;font-size:13.6px;color:#64686e;letter-spacing:-0.377px;">Rp 0</div>
<div class="t" style="left:1591.4px;top:850.7px;font-size:13.6px;color:#64686e;letter-spacing:-0.125px;">Rp 1.000.000</div>
<div class="t" style="left:1696.7px;top:834.1px;font-size:14.6px;color:#272a2f;letter-spacing:0.135px;">2 Contributors</div>
<div class="t" style="left:1913.2px;top:834.1px;font-size:14.6px;color:#272a2f;letter-spacing:-0.075px;">Expired</div>
<div class="t" style="left:2080.3px;top:832.0px;font-size:14.4px;color:#5166dd;letter-spacing:-0.107px;font-weight:700;">View details</div>
<div class="t" style="left:269.3px;top:891.8px;font-size:14.6px;color:#272a2f;letter-spacing:-0.372px;">ACHIEVMENT MEI</div>
<div class="t" style="left:269.3px;top:912.8px;font-size:14.6px;color:#64686e;letter-spacing:-0.487px;">01 May 2025 - 31 May 2025</div>
<div class="t" style="left:609.4px;top:901.1px;font-size:14.6px;color:#272a2f;letter-spacing:-0.098px;">Deal size</div>
<div class="t" style="left:830.6px;top:901.1px;font-size:14.6px;color:#272a2f;letter-spacing:0.017px;">Sales Pipeline Qontak [No Replace]</div>
<div class="t" style="left:1280.4px;top:887.6px;font-size:14.6px;color:#272a2f;letter-spacing:-0.437px;">Rp 0</div>
<div class="t" style="left:1318.0px;top:887.8px;font-size:10.8px;color:#1f3bb3;letter-spacing:0.794px;font-weight:700;">0%</div>
<div class="t" style="left:1280.4px;top:917.7px;font-size:13.6px;color:#64686e;letter-spacing:-0.377px;">Rp 0</div>
<div class="t" style="left:1600.0px;top:917.7px;font-size:13.6px;color:#64686e;letter-spacing:0.137px;">Rp 900.000</div>
<div class="t" style="left:1696.7px;top:901.1px;font-size:14.6px;color:#272a2f;letter-spacing:-0.050px;">1 Contributors</div>
<div class="t" style="left:1913.2px;top:901.1px;font-size:14.6px;color:#272a2f;letter-spacing:-0.075px;">Expired</div>
<div class="t" style="left:2080.3px;top:899.0px;font-size:14.4px;color:#5166dd;letter-spacing:-0.107px;font-weight:700;">View details</div>
<div class="t" style="left:269.3px;top:968.6px;font-size:14.6px;color:#64686e;letter-spacing:0.002px;">Row per page</div>
<div class="t" style="left:373.7px;top:968.6px;font-size:14.6px;color:#272a2f;letter-spacing:-1.223px;-webkit-text-stroke:.45px #272a2f;">10</div>
<div class="t" style="left:446.2px;top:968.6px;font-size:14.6px;color:#64686e;letter-spacing:-0.199px;">Showing 1-11 of 73</div>
<div class="t" style="left:2020.8px;top:967.6px;font-size:14.6px;color:#272a2f;letter-spacing:-1.125px;">1</div>
<div class="t" style="left:2081.4px;top:968.6px;font-size:14.6px;color:#64686e;letter-spacing:0.179px;">of 8 page</div></div>
<div class="sbt" style="left:2248px;top:59px;height:1114px"></div>
<div class="sbth" style="left:2252px;top:62px;height:1200px"></div>
<div class="sbt" style="left:2263px;top:0;height:1173px"></div>
<div class="sbth" style="left:2267px;top:3px;height:1200px"></div>
</body>
</html>
